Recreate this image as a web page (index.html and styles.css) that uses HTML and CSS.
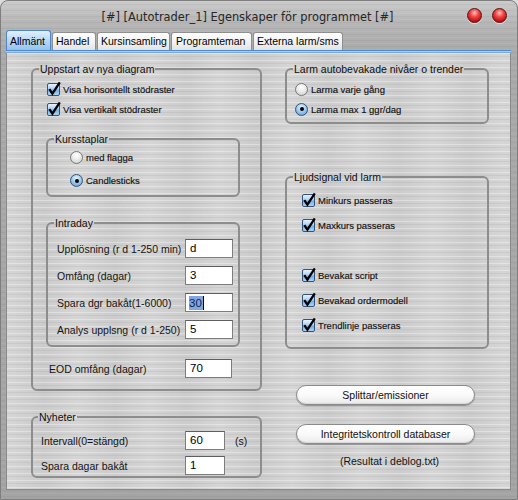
FILE: index.html
```html
<!DOCTYPE html>
<html lang="sv">
<head>
<meta charset="utf-8">
<title>Egenskaper för programmet</title>
<link rel="stylesheet" href="styles.css">
</head>
<body>
<div class="window">
  <div class="titlebar">
    <div class="title">[#] [Autotrader_1] Egenskaper för programmet [#]</div>
    <div class="wbtns"><span class="wbtn"></span><span class="wbtn"></span></div>
  </div>
  <div class="tabs">
    <div class="tab active w1">Allmänt</div>
    <div class="tab w2">Handel</div>
    <div class="tab w3">Kursinsamling</div>
    <div class="tab w4">Programteman</div>
    <div class="tab w5">Externa larm/sms</div>
  </div>
  <div class="tabline"></div>
  <div class="page">
    <div class="col">
      <fieldset class="grp uppstart">
        <legend class="lg6">Uppstart av nya diagram</legend>
        <div class="ubody">
          <div class="opt r20"><span class="cb"><svg viewBox="0 0 14 14" width="14" height="14"><path d="M2.3 6.2 L5.4 10.6 L12.8 -0.6"/></svg></span><span class="olbl">Visa horisontellt stödraster</span></div>
          <div class="opt r20"><span class="cb"><svg viewBox="0 0 14 14" width="14" height="14"><path d="M2.3 6.2 L5.4 10.6 L12.8 -0.6"/></svg></span><span class="olbl">Visa vertikalt stödraster</span></div>
          <fieldset class="grp inner kurs">
            <legend class="lg6">Kursstaplar</legend>
            <div class="kbody">
              <div class="opt r23"><span class="rb"></span><span class="olbl">med flagga</span></div>
              <div class="opt r23"><span class="rb on"><span class="dot"></span></span><span class="olbl">Candlesticks</span></div>
            </div>
          </fieldset>
          <fieldset class="grp inner intra">
            <legend class="lg6">Intraday</legend>
            <div class="ibody">
              <div class="frow"><span class="flbl">Upplösning (r d 1-250 min)</span><span class="inp w48">d</span></div>
              <div class="frow"><span class="flbl">Omfång (dagar)</span><span class="inp w48">3</span></div>
              <div class="frow"><span class="flbl">Spara dgr bakåt(1-6000)</span><span class="inp w48"><span class="sel">30</span><span class="caret"></span></span></div>
              <div class="frow"><span class="flbl">Analys upplsng (r d 1-250)</span><span class="inp w48">5</span></div>
            </div>
          </fieldset>
          <div class="frow eod"><span class="flbl">EOD omfång (dagar)</span><span class="inp w47">70</span></div>
        </div>
      </fieldset>
      <fieldset class="grp nyheter">
        <legend class="lg5">Nyheter</legend>
        <div class="nbody">
          <div class="frow"><span class="flbl">Intervall(0=stängd)</span><span class="inp w40">60</span><span class="unit">(s)</span></div>
          <div class="frow"><span class="flbl">Spara dagar bakåt</span><span class="inp w40">1</span></div>
        </div>
      </fieldset>
    </div>
    <div class="col">
      <fieldset class="grp larm">
        <legend class="lg6">Larm autobevakade nivåer o trender</legend>
        <div class="lbody">
          <div class="opt r20"><span class="rb"></span><span class="olbl">Larma varje gång</span></div>
          <div class="opt r20"><span class="rb on"><span class="dot"></span></span><span class="olbl">Larma max 1 ggr/dag</span></div>
        </div>
      </fieldset>
      <fieldset class="grp ljud">
        <legend class="lg6">Ljudsignal vid larm</legend>
        <div class="jbody">
          <div class="opt r25"><span class="cb"><svg viewBox="0 0 14 14" width="14" height="14"><path d="M2.3 6.2 L5.4 10.6 L12.8 -0.6"/></svg></span><span class="olbl">Minkurs passeras</span></div>
          <div class="opt r25"><span class="cb"><svg viewBox="0 0 14 14" width="14" height="14"><path d="M2.3 6.2 L5.4 10.6 L12.8 -0.6"/></svg></span><span class="olbl">Maxkurs passeras</span></div>
          <div class="r25"></div>
          <div class="opt r25"><span class="cb"><svg viewBox="0 0 14 14" width="14" height="14"><path d="M2.3 6.2 L5.4 10.6 L12.8 -0.6"/></svg></span><span class="olbl">Bevakat script</span></div>
          <div class="opt r25"><span class="cb"><svg viewBox="0 0 14 14" width="14" height="14"><path d="M2.3 6.2 L5.4 10.6 L12.8 -0.6"/></svg></span><span class="olbl">Bevakad ordermodell</span></div>
          <div class="opt r25"><span class="cb"><svg viewBox="0 0 14 14" width="14" height="14"><path d="M2.3 6.2 L5.4 10.6 L12.8 -0.6"/></svg></span><span class="olbl">Trendlinje passeras</span></div>
        </div>
      </fieldset>
      <div class="btn b1">Splittar/emissioner</div>
      <div class="btn b2">Integritetskontroll databaser</div>
      <div class="note">(Resultat i deblog.txt)</div>
    </div>
  </div>
</div>
</body>
</html>
```
FILE: styles.css
```css
* { box-sizing: border-box; }
html, body { margin: 0; padding: 0; }
body {
  width: 518px;
  height: 500px;
  overflow: hidden;
  background: #dcdcdc;
  font-family: "Liberation Sans", Arial, sans-serif;
  color: #111;
}
.window {
  width: 518px;
  height: 500px;
  border: 1px solid #7e7e7e;
  border-radius: 8px 8px 0 0;
  background-color: #a9a9a9;
  background-image:
    repeating-linear-gradient(180deg, rgba(255,255,255,0.06) 0px, rgba(255,255,255,0.06) 1px, rgba(0,0,0,0) 1px, rgba(0,0,0,0) 3px, rgba(0,0,0,0.04) 3px, rgba(0,0,0,0.04) 4px, rgba(0,0,0,0) 4px, rgba(0,0,0,0) 6px),
    linear-gradient(180deg, #cbcbcb 0px, #b7b7b7 20px, #aaaaaa 50px, #a4a4a4 100%);
  display: flex;
  flex-direction: column;
  overflow: hidden;
}
.titlebar {
  height: 29px;
  display: flex;
  align-items: center;
  flex: none;
}
.title {
  flex: 1;
  text-align: center;
  padding-left: 27px;
  padding-top: 3px;
  font-family: "DejaVu Sans", "Liberation Sans", sans-serif;
  font-size: 11.4px;
  color: #262626;
  white-space: nowrap;
}
.wbtns {
  display: flex;
  gap: 10px;
  padding-right: 9px;
  width: 50px;
  flex: none;
}
.wbtn {
  width: 15px;
  height: 15px;
  border-radius: 50%;
  border: 1px solid #5a1010;
  background: radial-gradient(circle at 50% 30%, #ffc2c2 0px, #f04848 4px, #c51414 8px, #8c0606 100%);
  box-shadow: 0 1px 1px rgba(255,255,255,0.6);
}
.tabs {
  height: 20px;
  display: flex;
  align-items: flex-end;
  padding-left: 5px;
  flex: none;
}
.tab {
  height: 18px;
  font-size: 10.5px;
  line-height: 17px;
  padding-left: 3px;
  white-space: nowrap;
  color: #000;
  background: linear-gradient(180deg, #ffffff, #f1f1f1 60%, #e2e2e2);
  border: 1px solid #8f8f8f;
  border-bottom: none;
  border-radius: 3px 3px 0 0;
  margin-right: 1px;
}
.tab.active {
  height: 20px;
  line-height: 20px;
  background: linear-gradient(180deg, #e2f0fc, #b7d8f6 50%, #93c3ef);
  border-color: #4e86c8;
}
.w1 { width: 45px; }
.w2 { width: 44px; }
.w3 { width: 73px; }
.w4 { width: 81px; padding-left: 4px; }
.w5 { width: 90px; }
.tabline {
  height: 3px;
  margin: 0 6px 0 5px;
  flex: none;
  border-top: 1px solid #4f8ad0;
  background: #a9cff5;
  border-bottom: 1px solid #7aa9dc;
}
.page {
  height: 437px;
  margin: 0 6px 0 5px;
  flex: none;
  border: 1px solid #8a8a8a;
  border-top: none;
  background-color: #d2d2d2;
  background-image:
    repeating-linear-gradient(180deg, rgba(255,255,255,0.35) 0px, rgba(255,255,255,0.35) 1px, rgba(0,0,0,0) 1px, rgba(0,0,0,0) 3px, rgba(0,0,0,0.05) 3px, rgba(0,0,0,0.05) 4px, rgba(0,0,0,0) 4px, rgba(0,0,0,0) 7px),
    repeating-linear-gradient(90deg, rgba(255,255,255,0.08) 0px, rgba(0,0,0,0.03) 37px, rgba(255,255,255,0.08) 71px);
  display: grid;
  grid-template-columns: 231px 204px;
  column-gap: 23px;
  align-items: start;
  padding: 10px 0 0 24px;
}
.col { display: flex; flex-direction: column; }

.grp {
  margin: 0;
  padding: 0;
  min-width: 0;
  border: 2px solid #8d8d8d;
  border-radius: 6px;
}
legend {
  padding: 0 1px;
  font-size: 10.5px;
  line-height: 12px;
  color: #0d0d0d;
  white-space: nowrap;
}
.lg6 { margin-left: 6px; }
.lg5 { margin-left: 5px; }

.opt { display: flex; align-items: center; }
.r20 { height: 20px; }
.r23 { height: 23px; }
.r25 { height: 25px; }
.olbl { font-size: 9.5px; color: #111; -webkit-text-stroke: 0.15px #111; }

.cb {
  position: relative;
  flex: none;
  width: 13px;
  height: 13px;
  border: 1px solid #34537a;
  border-radius: 2px;
  background: linear-gradient(180deg, #e6f3fe 0%, #a9d2f5 45%, #72aee6 55%, #a8d5fb 100%);
  margin-right: 3px;
}
.cb svg {
  position: absolute;
  left: -1px;
  top: -1px;
  overflow: visible;
}
.cb path {
  fill: none;
  stroke: #000;
  stroke-width: 2.3;
  stroke-linejoin: miter;
  stroke-linecap: butt;
}
.rb {
  flex: none;
  width: 13px;
  height: 13px;
  border-radius: 50%;
  border: 1px solid #777;
  background: radial-gradient(circle at 50% 30%, #ffffff 0px, #f2f2f2 3px, #d4d4d4 8px, #b9b9b9 100%);
  margin-right: 3px;
  display: flex;
  align-items: center;
  justify-content: center;
}
.rb.on {
  border-color: #34537a;
  background: radial-gradient(circle at 50% 30%, #eaf5ff 0px, #b5d9f7 3px, #6aa8e3 8px, #3f7fc6 100%);
}
.dot { width: 4px; height: 4px; border-radius: 50%; background: #000; }

.ubody { padding: 4px 0 11px 14px; }
.kurs { margin-top: 14px; margin-left: -1px; width: 194px; }
.kbody { padding: 1px 0 3px 22px; }
.intra { margin-top: 20px; margin-left: -1px; width: 194px; }
.ibody { padding: 10px 0 6px 9px; display: flex; flex-direction: column; gap: 8px; }
.frow { display: flex; align-items: center; height: 19px; }
.flbl { font-size: 10.5px; color: #141414; width: 128px; flex: none; white-space: nowrap; }
.eod { margin-top: 12px; padding-left: 2px; }
.eod .flbl { width: 136px; }
.inp {
  height: 19px;
  background: #fff;
  border: 1px solid #7d7d7d;
  border-top-color: #5e5e5e;
  font-size: 11.5px;
  line-height: 17px;
  padding-left: 4px;
  color: #000;
  display: flex;
  align-items: center;
}
.w48 { width: 48px; }
.w47 { width: 47px; }
.w40 { width: 40px; }
.sel { background: #7ea7e2; color: #0d1f4f; line-height: 14px; padding: 0 1px 0 0; margin-left: -1px; }
.caret { width: 1px; height: 14px; background: #000; }
.unit { font-size: 10.5px; margin-left: 10px; color: #141414; }

.nyheter { margin-top: 20px; }
.nbody { padding: 8px 0 1px 8px; display: flex; flex-direction: column; gap: 6px; }
.nbody .flbl { width: 144px; }

.lbody { padding: 4px 0 3px 8px; }
.ljud { margin-top: 47px; }
.jbody { padding: 5px 0 9px 15px; }

.btn {
  width: 179px;
  height: 20px;
  margin-left: 11px;
  border: 1px solid #8b8b8b;
  border-radius: 10px;
  background: linear-gradient(180deg, #ffffff 0%, #fafafa 50%, #eaeaea 100%);
  box-shadow: 0 1px 1px rgba(0,0,0,0.3), inset 0 -1px 1px rgba(0,0,0,0.08);
  font-size: 10.5px;
  color: #111;
  display: flex;
  align-items: center;
  justify-content: center;
}
.b1 { margin-top: 36px; }
.b2 { margin-top: 19px; }
.note {
  width: 179px;
  margin: 10px 0 0 11px;
  padding-left: 8px;
  text-align: center;
  font-size: 10.5px;
  line-height: 14px;
  color: #141414;
}
```
